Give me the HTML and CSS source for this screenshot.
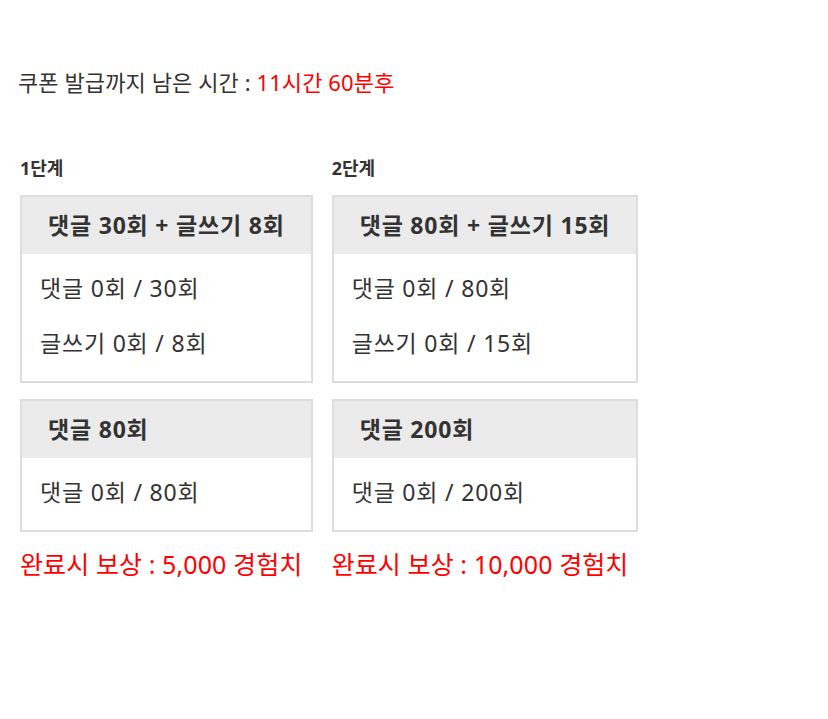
FILE: index.html
```html
<!DOCTYPE html>
<html lang="ko">
<head>
    <meta charset="UTF-8">
    <meta name="viewport" content="width=device-width, initial-scale=1.0">
    <title>쿠폰 발급</title>
    <link rel="stylesheet" href="styles.css">
</head>
<body>

<div class="wrap">
    <p class="remain">쿠폰 발급까지 남은 시간 : <span class="red">11시간 60분후</span></p>

    <div class="stages">
        <div class="stage">
            <h4>1단계</h4>
            <div class="mission">
                <div class="mission-head">댓글 30회 + 글쓰기 8회</div>
                <div class="mission-body">
                    <p>댓글 0회 / 30회</p>
                    <p>글쓰기 0회 / 8회</p>
                </div>
            </div>
            <div class="mission">
                <div class="mission-head">댓글 80회</div>
                <div class="mission-body">
                    <p>댓글 0회 / 80회</p>
                </div>
            </div>
            <p class="reward">완료시 보상 : 5,000 경험치</p>
        </div>

        <div class="stage">
            <h4>2단계</h4>
            <div class="mission">
                <div class="mission-head">댓글 80회 + 글쓰기 15회</div>
                <div class="mission-body">
                    <p>댓글 0회 / 80회</p>
                    <p>글쓰기 0회 / 15회</p>
                </div>
            </div>
            <div class="mission">
                <div class="mission-head">댓글 200회</div>
                <div class="mission-body">
                    <p>댓글 0회 / 200회</p>
                </div>
            </div>
            <p class="reward">완료시 보상 : 10,000 경험치</p>
        </div>
    </div>
</div>

</body>
</html>
```

FILE: styles.css
```css
body {
    margin: 0;
    background-color: #fff;
    color: #333;
    font-family: "Noto Sans", "Noto Sans CJK KR", sans-serif;
}
.wrap {
    padding: 66px 0 0 18px;
}
.remain {
    margin: 0;
    font-size: 22px;
    line-height: 32px;
    letter-spacing: 0.1px;
}
.red {
    color: #ff0000;
}
.stages {
    display: flex;
    align-items: flex-start;
    gap: 19px;
    margin-top: 57px;
    padding-left: 2px;
}
.stage h4 {
    margin: 0 0 14px;
    font-size: 18px;
    line-height: 26px;
    font-weight: bold;
    letter-spacing: 0px;
}
.mission {
    border: 2px solid #dddddd;
    margin-bottom: 16px;
}
.mission-head {
    background-color: #ebebeb;
    padding: 0 26px;
    line-height: 57px;
    font-size: 23px;
    font-weight: bold;
    letter-spacing: 0.8px;
    white-space: nowrap;
}
.mission-body {
    padding: 7px 18px 10px;
}
.mission-body p {
    margin: 0;
    font-size: 23px;
    line-height: 55px;
    letter-spacing: 0.8px;
}
.reward {
    margin: 14px 0 0;
    font-size: 25px;
    line-height: 32px;
    color: #ff0000;
    letter-spacing: 0.1px;
    white-space: nowrap;
}
```
